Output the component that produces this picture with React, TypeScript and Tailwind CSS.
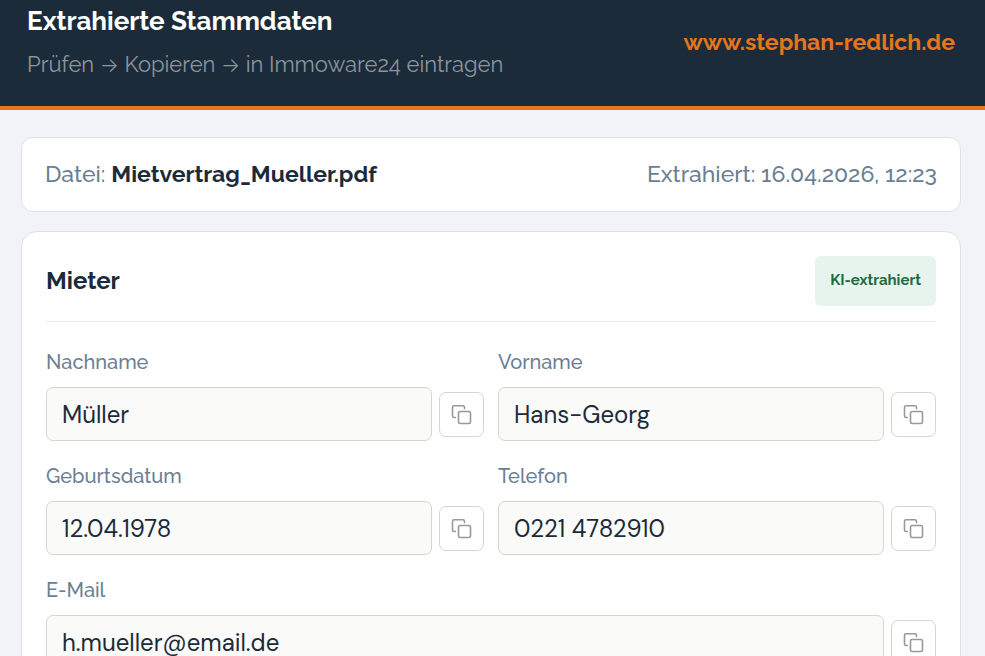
import { useId, useState } from "react";

function CopyIcon() {
  return (
    <svg
      viewBox="0 0 23 23"
      className="size-[23px]"
      fill="none"
      stroke="currentColor"
      strokeWidth="1.6"
      strokeLinecap="round"
      strokeLinejoin="round"
      aria-hidden="true"
    >
      <rect x="8.5" y="8.5" width="12" height="12" rx="1.6" />
      <path d="M14.5 5.6V4.4A1.6 1.6 0 0 0 12.9 2.8H4.1A1.6 1.6 0 0 0 2.5 4.4v8.5A1.6 1.6 0 0 0 4.1 14.5H5.4" />
    </svg>
  );
}

function Arrow() {
  return <span className="font-['Inter',sans-serif] text-xl leading-none font-light">→</span>;
}

type FieldProps = { label: string; initial: string; wide?: boolean };

function Field({ label, initial, wide }: FieldProps) {
  const id = useId();
  const [value, setValue] = useState(initial);
  return (
    <div className={wide ? "col-span-2" : ""}>
      <label
        htmlFor={id}
        className="mb-[9px] block text-xl leading-8 font-medium text-[#6b7f94]"
      >
        {label}
      </label>
      <div className="flex items-center gap-[7px]">
        <input
          id={id}
          type="text"
          value={value}
          onChange={(e) => setValue(e.target.value)}
          className="h-[54px] min-w-0 flex-1 rounded-[7px] border border-[#d6d6cb] bg-[#fafaf8] px-[15px] font-['DM_Sans','Inter',sans-serif] text-2xl text-[#1c2b3a] outline-none focus:border-[#e8751a]"
        />
        <button
          type="button"
          aria-label={`${label} kopieren`}
          onClick={() => navigator.clipboard?.writeText(value)}
          className="flex size-[45px] shrink-0 items-center justify-center rounded-[7px] border border-[#d6d6cb] bg-white text-[#999999]"
        >
          <CopyIcon />
        </button>
      </div>
    </div>
  );
}

export default function App() {
  return (
    <div className="min-h-screen bg-[#f2f3f8] font-['Raleway','Liberation_Sans',sans-serif] text-[#1c2b3a]">
      <header className="flex items-start justify-between border-b-4 border-[#e8751a] bg-[#1c2b3a] pt-[3px] pr-[30px] pb-6 pl-[27px]">
        <div>
          <h1 className="text-[26px] leading-9 font-bold text-white">
            Extrahierte Stammdaten
          </h1>
          <p className="mt-[7px] text-[22px] leading-9 text-[#8d959c]">
            Prüfen <Arrow /> Kopieren <Arrow /> in Immoware24 eintragen
          </p>
        </div>
        <a
          href="https://www.stephan-redlich.de"
          className="mt-[21px] text-[23px] leading-9 font-bold text-[#e8751a]"
        >
          www.stephan-redlich.de
        </a>
      </header>

      <main className="flex flex-col gap-[19px] pt-[27px] pr-6 pl-[21px]">
        <section className="flex items-center justify-between rounded-xl border border-[#dde1e9] bg-white px-[23px] pt-[18px] pb-5 text-[23px] leading-[35px] font-medium text-[#6b7f94]">
          <p>
            Datei: <strong className="font-bold text-[#1c2b3a]">Mietvertrag_Mueller.pdf</strong>
          </p>
          <p>Extrahiert: 16.04.2026, 12:23</p>
        </section>

        <section className="rounded-2xl border border-[#dde1e9] bg-white p-6">
          <div className="mb-6 flex items-center justify-between border-b border-[#ecece6] pb-[15px]">
            <h2 className="text-2xl font-bold">Mieter</h2>
            <span className="rounded-md bg-[#e7f4ed] px-[15px] pt-3 pb-3.5 text-[15px] leading-6 font-bold text-[#1f6b3f]">
              KI-extrahiert
            </span>
          </div>
          <div className="grid grid-cols-2 gap-x-3.5 gap-y-[19px]">
            <Field label="Nachname" initial="Müller" />
            <Field label="Vorname" initial="Hans-Georg" />
            <Field label="Geburtsdatum" initial="12.04.1978" />
            <Field label="Telefon" initial="0221 4782910" />
            <Field label="E-Mail" initial="h.mueller@email.de" wide />
          </div>
        </section>
      </main>
    </div>
  );
}
